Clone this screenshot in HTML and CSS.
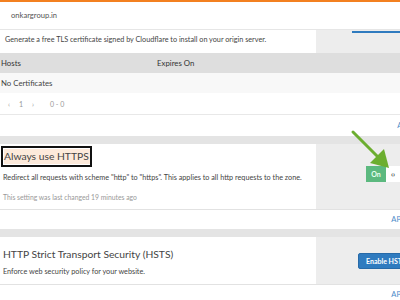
FILE: index.html
```html
<!DOCTYPE html>
<html lang="en">

<head>
    <meta charset="UTF-8">
    <meta name="viewport" content="width=device-width, initial-scale=1.0">
    <title>SSL/TLS</title>
    <link rel="stylesheet" href="styles.css">
</head>

<body>
    <div class="page">
        <div class="zone-bar">onkargroup.in</div>

        <section class="card">
            <div class="card-body">
                <div class="card-main">
                    <p class="desc gen">Generate a free TLS certificate signed by Cloudflare to install on your origin server.</p>
                </div>
                <div class="card-side">
                    <span class="btn-edge"></span>
                </div>
            </div>
            <div class="table-head">
                <span class="col-hosts">Hosts</span>
                <span>Expires On</span>
            </div>
            <div class="table-empty">No Certificates</div>
            <div class="pager">
                <span>&lsaquo;</span>
                <span>1</span>
                <span>&rsaquo;</span>
                <span class="count">0 - 0</span>
            </div>
            <div class="card-foot first"><a href="#">API</a></div>
        </section>

        <div class="gap"></div>

        <section class="card">
            <div class="card-body https">
                <div class="card-main">
                    <h2 class="title boxed"><span>Always use HTTPS</span></h2>
                    <p class="desc">Redirect all requests with scheme "http" to "https". This applies to all http requests to the zone.</p>
                    <p class="changed">This setting was last changed 19 minutes ago</p>
                </div>
                <div class="card-side">
                    <div class="toggle">
                        <span class="on">On</span>
                        <span class="code">&lsaquo;&rsaquo;</span>
                    </div>
                </div>
            </div>
            <div class="card-foot"><a href="#">API</a></div>
        </section>

        <div class="gap"></div>

        <section class="card">
            <div class="card-body hsts">
                <div class="card-main">
                    <h2 class="title">HTTP Strict Transport Security (HSTS)</h2>
                    <p class="desc">Enforce web security policy for your website.</p>
                </div>
                <div class="card-side">
                    <button type="button" class="btn-blue">Enable HSTS</button>
                </div>
            </div>
            <div class="card-foot"><a href="#">API</a></div>
        </section>

        <!-- annotation arrow -->
        <svg class="arrow" width="60" height="60" viewBox="0 0 60 60">
            <line x1="4" y1="4" x2="32" y2="32" stroke="#6cae2f" stroke-width="3" stroke-linecap="round" />
            <polygon points="40,40 21,35 35,21" fill="#6cae2f" />
        </svg>
    </div>
</body>

</html>
```

FILE: styles.css
```css
body {
    margin: 0;
    padding: 0;
    font-family: "Lato", "Open Sans", sans-serif;
    color: #444;
    background: #fff;
    overflow: hidden;
}

.page {
    position: relative;
    width: 400px;
    border-top: 2px solid #f38020;
}

.zone-bar {
    height: 27px;
    padding-left: 11px;
    font-size: 7.6px;
    line-height: 27px;
    color: #555;
    border-bottom: 1px solid #e6e6e6;
}

.card-body {
    display: grid;
    grid-template-columns: 316px 1fr;
}

.card-main {
    padding: 0 3px;
    background: #fff;
}

.card-side {
    background: #ededed;
    display: flex;
    justify-content: flex-end;
}

.desc {
    margin: 0;
    font-size: 7.25px;
    color: #444;
}

.gen {
    padding: 5px 2px;
    height: 13px;
}

.btn-edge {
    display: block;
    width: 48px;
    height: 2px;
    margin-top: 1px;
    background: #2f7bbf;
}

.table-head {
    display: flex;
    height: 20px;
    align-items: center;
    background: #dedede;
    font-size: 7.8px;
    color: #333;
}

.col-hosts {
    width: 156px;
    padding-left: 1px;
}

.table-empty {
    height: 20px;
    line-height: 20px;
    padding-left: 1px;
    background: #f8f8f8;
    font-size: 7.8px;
    color: #444;
}

.pager {
    display: flex;
    gap: 9px;
    height: 21px;
    align-items: center;
    padding-left: 8px;
    font-size: 7px;
    color: #999;
    border-bottom: 1px solid #e8e8e8;
}

.pager .count {
    margin-left: 7px;
}

.card-foot {
    display: flex;
    justify-content: flex-end;
    height: 19px;
    align-items: center;
    font-size: 7.5px;
}

.card-foot a {
    color: #4a8ac9;
    text-decoration: none;
    margin-right: -3px;
}

.card-foot.first {
    height: 21px;
}

.card-foot.first a {
    margin-right: -9px;
}

.gap {
    height: 8px;
    background: #e4e4e4;
}

.https {
    height: 65px;
    border-bottom: 1px solid #e2e2e2;
}

.title {
    margin: 0;
    font-size: 10.3px;
    font-weight: normal;
    color: #444;
}

.title.boxed {
    display: inline-block;
    margin: 2px 0 0 -2px;
    padding: 1px 0 1px 1px;
    border: 2px solid #111;
}

.title.boxed span {
    display: block;
    background: #fdeadb;
    padding: 2px 1px 2px 0;
    line-height: 11px;
}

.https .desc {
    margin-top: 6px;
}

.changed {
    margin: 11px 0 0;
    font-size: 6.8px;
    color: #999;
}

.https .card-side {
    align-items: flex-start;
    padding-top: 22px;
}

.toggle {
    display: flex;
    height: 16px;
    font-size: 7px;
}

.toggle .on {
    width: 20px;
    background: #5cb97f;
    color: #e8fff0;
    font-weight: bold;
    display: flex;
    align-items: center;
    justify-content: center;
}

.toggle .code {
    width: 14px;
    background: #fff;
    color: #333;
    font-weight: bold;
    display: flex;
    align-items: center;
    justify-content: center;
}

.hsts {
    height: 47px;
    border-bottom: 1px solid #e2e2e2;
}

.hsts .title {
    margin-top: 11px;
}

.hsts .desc {
    margin-top: 7px;
}

.hsts .card-side {
    align-items: flex-start;
    padding-top: 16px;
}

.btn-blue {
    width: 48px;
    height: 16px;
    margin-right: -6px;
    padding: 0 0 0 7px;
    border: 1px solid #276aa8;
    border-radius: 2px;
    background: #2f7bbf;
    color: #fff;
    font-family: inherit;
    font-size: 7px;
    font-weight: bold;
    text-align: left;
    white-space: nowrap;
    overflow: hidden;
}

.arrow {
    position: absolute;
    left: 349px;
    top: 126px;
}
```
